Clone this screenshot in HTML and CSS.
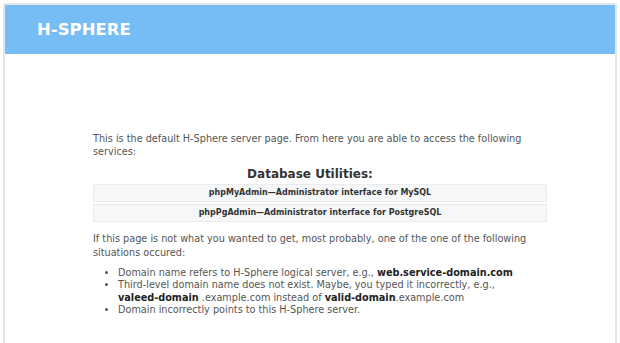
FILE: index.html
```html
<!DOCTYPE HTML>
<html>
<head>
<meta charset="utf-8">
<title>H-Sphere</title>
<link rel="stylesheet" href="styles.css">
</head>
<body>
<div class="page">
  <div class="header">
    <span class="logo">H-SPHERE</span>
  </div>
  <div class="content">
    <p>This is the default H-Sphere server page. From here you are able to access the following services:</p>
    <h2>Database Utilities:</h2>
    <div class="util">phpMyAdmin&mdash;Administrator interface for MySQL</div>
    <div class="util">phpPgAdmin&mdash;Administrator interface for PostgreSQL</div>
    <p>If this page is not what you wanted to get, most probably, one of the one of the following situations occured:</p>
    <ul>
      <li>Domain name refers to H-Sphere logical server, e.g., <b>web.service-domain.com</b></li>
      <li>Third-level domain name does not exist. Maybe, you typed it incorrectly, e.g., <b>valeed-domain</b> .example.com instead of <b>valid-domain</b>.example.com</li>
      <li>Domain incorrectly points to this H-Sphere server.</li>
    </ul>
  </div>
</div>
</body>
</html>
```
FILE: styles.css
```css
* {
  box-sizing: border-box;
}
body {
  margin: 0;
  background: white;
  font-family: "DejaVu Sans", Verdana, sans-serif;
  color: #555;
}
.page {
  margin: 3px 3px 0 3px;
  border: 2px solid #e6e6e6;
  border-bottom: none;
  min-height: 340px;
}
.header {
  background-color: #76bcf5;
  height: 49px;
  padding: 0 0 0 32px;
  display: flex;
  align-items: center;
}
.logo {
  color: white;
  font-weight: bold;
  font-size: 16.5px;
}
.content {
  width: 454px;
  margin: 0 0 0 88px;
  padding-top: 78px;
  font-size: 9.7px;
  line-height: 13px;
}
p {
  margin: 0;
}
h2 {
  margin: 8px 0 2px;
  padding-right: 20px;
  text-align: center;
  font-size: 12px;
  line-height: 16px;
  color: #333;
}
.util {
  background: #f6f7f8;
  border: 1px solid #ececec;
  height: 18px;
  margin-bottom: 2px;
  text-align: center;
  font-size: 8px;
  font-weight: bold;
  line-height: 16px;
  color: #333;
}
.util + p {
  margin-top: 10px;
  line-height: 13.5px;
}
ul {
  margin: 8px 0 0;
  padding-left: 25px;
  line-height: 12.3px;
}
b {
  color: #222;
  white-space: nowrap;
}
```
